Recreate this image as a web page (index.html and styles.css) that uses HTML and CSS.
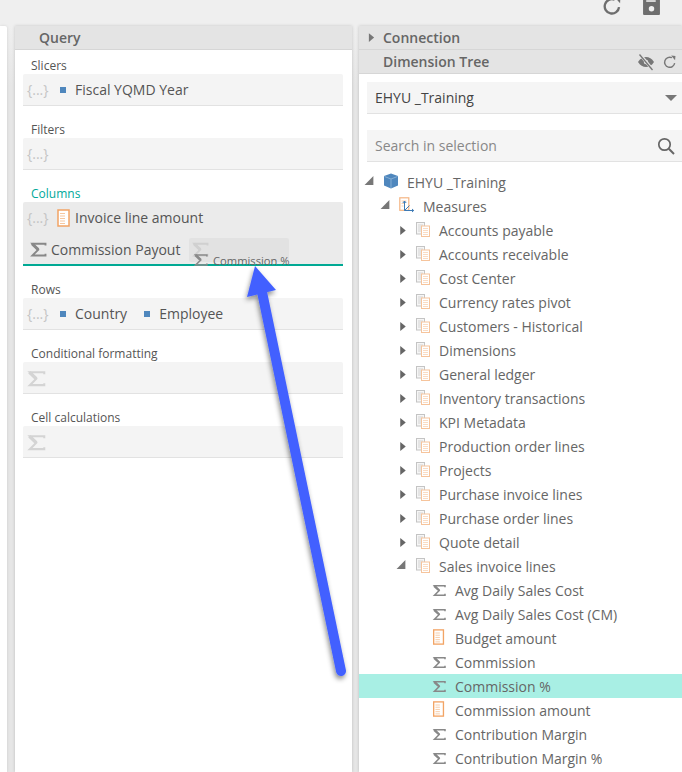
FILE: index.html
```html
<!DOCTYPE html>
<html lang="en">
<head>
<meta charset="utf-8">
<title>Query designer</title>
<link rel="stylesheet" href="styles.css">
</head>
<body>
<svg class="defs" width="0" height="0" aria-hidden="true">
  <symbol id="sigma" viewBox="0 0 16 16"><path d="M14 5.200V3.800H3.500L8.200 8.500 3.500 13.200H14V11.800" fill="none" stroke="currentColor" stroke-width="1.500"/><path d="M3.200 3.800 8.200 8.500" stroke="currentColor" stroke-width="2.400"/></symbol>
  <symbol id="measure" viewBox="0 0 16 18"><rect x="2" y="1" width="11" height="16" fill="#fff" stroke="#f2a465" stroke-width="1.500"/><path d="M4 4.500h5M4 7h5M4 9.500h5M4 12h5M4 14.500h5" stroke="#f6c79f" stroke-width="1"/></symbol>
  <symbol id="table" viewBox="0 0 16 16"><rect x="1.500" y="1.500" width="8" height="11.500" fill="#f6f6f6" stroke="#c4c4c4"/><path d="M3 4h5M3 6h5M3 8h5M3 10h5" stroke="#d4d4d4"/><rect x="6.500" y="5" width="8" height="10.500" fill="#fff" stroke="#f6c49c"/><path d="M8 7.500h5M8 9.500h5M8 11.500h5M8 13.500h5" stroke="#fadcc4"/></symbol>
  <symbol id="cube" viewBox="0 0 16 16"><path d="M8 .5 15 3v9.500L8 15.500 1 12.500V3z" fill="#4f87bd"/><path d="M1.500 3.500 8 6l6.500-2.500M8 6v9" fill="none" stroke="#86aed4" stroke-width="1"/></symbol>
  <symbol id="measures" viewBox="0 0 16 16"><rect x=".8" y=".8" width="9" height="12.500" fill="#fff" stroke="#f4b583" stroke-width="1.200"/><path d="M2.500 4h5M2.500 6.500h3M2.500 9h2" stroke="#f8cfae"/><path d="M5.500 4v9.500H14.500M3.800 6 5.500 4l1.700 2M13 12l1.700 1.500-1.700 1.500M5.500 13.500l5-5" fill="none" stroke="#3d7ab5" stroke-width="1"/></symbol>
  <symbol id="tri-right" viewBox="0 0 8 12"><path d="M1 1l6 5-6 5z" fill="currentColor"/></symbol>
  <symbol id="tri-open" viewBox="0 0 10 10"><path d="M9 1v8H1z" fill="currentColor"/></symbol>
</svg>

<header class="toolbar">
  <svg class="tool-icon" viewBox="0 0 18 18"><path d="M15.200 10.500A6.800 6.800 0 1 1 11 3.500" fill="none" stroke="currentColor" stroke-width="2.200"/><path d="M9.500 -.5l7 .3-.3 7z" fill="currentColor"/></svg>
  <svg class="tool-icon" viewBox="0 0 18 18"><path d="M1 0h13l3 3v14a1 1 0 0 1-1 1H2a1 1 0 0 1-1-1z" fill="currentColor"/><rect x="4" y="4" width="9" height="1.500" fill="#efefef"/><circle cx="9" cy="12" r="2.600" fill="#efefef"/></svg>
</header>

<main class="workspace">
  <div class="side-stub"></div>

  <section class="panel query">
    <h2 class="panel-head query-head">Query</h2>
    <div class="query-body">
      <div class="slot">
        <div class="slot-label">Slicers</div>
        <div class="slot-box">
          <span class="braces">{...}</span>
          <span class="chip"><i class="dot"></i>Fiscal YQMD Year</span>
        </div>
      </div>
      <div class="slot">
        <div class="slot-label">Filters</div>
        <div class="slot-box"><span class="braces">{...}</span></div>
      </div>
      <div class="slot">
        <div class="slot-label active">Columns</div>
        <div class="slot-box drop">
          <div class="drop-row">
            <span class="braces">{...}</span>
            <span class="chip"><svg class="ico-measure"><use href="#measure"/></svg>Invoice line amount</span>
          </div>
          <div class="drop-row second">
            <span class="chip"><svg class="ico-sigma"><use href="#sigma"/></svg>Commission Payout</span>
          </div>
          <div class="ghost">
            <svg class="ghost-back"><use href="#sigma"/></svg>
            <svg class="ghost-front"><use href="#sigma"/></svg>
            <span class="ghost-text">Commission %</span>
          </div>
        </div>
      </div>
      <div class="slot">
        <div class="slot-label">Rows</div>
        <div class="slot-box">
          <span class="braces">{...}</span>
          <span class="chip"><i class="dot"></i>Country</span>
          <span class="chip"><i class="dot"></i>Employee</span>
        </div>
      </div>
      <div class="slot">
        <div class="slot-label">Conditional formatting</div>
        <div class="slot-box"><svg class="ico-faint"><use href="#sigma"/></svg></div>
      </div>
      <div class="slot">
        <div class="slot-label">Cell calculations</div>
        <div class="slot-box"><svg class="ico-faint"><use href="#sigma"/></svg></div>
      </div>
    </div>
  </section>

  <section class="panel tree-panel">
    <h2 class="panel-head"><svg class="head-tri"><use href="#tri-right"/></svg>Connection</h2>
    <h2 class="panel-head">
      <span class="head-title">Dimension Tree</span>
      <svg class="head-icon" viewBox="0 0 18 18"><path d="M1 9c2-3.500 5-5 8-5s6 1.500 8 5c-2 3.500-5 5-8 5s-6-1.500-8-5z" fill="currentColor"/><circle cx="9" cy="9" r="2.200" fill="#e4e4e4"/><path d="M3 1.500 15.500 16.500" stroke="#e4e4e4" stroke-width="3"/><path d="M2.500 1.500 15.500 17" stroke="currentColor" stroke-width="1.300"/></svg>
      <svg class="head-icon small" viewBox="0 0 18 18"><path d="M15 10.500A6.500 6.500 0 1 1 11.500 3.500" fill="none" stroke="currentColor" stroke-width="1.800"/><path d="M10.500 .8l5.500.5-.5 5.500z" fill="currentColor"/></svg>
    </h2>
    <div class="tree-body">
      <div class="select"><span>EHYU _Training</span><i class="caret"></i></div>
      <div class="search"><span>Search in selection</span>
        <svg class="search-icon" viewBox="0 0 18 18"><circle cx="7.500" cy="7.500" r="5.700" fill="none" stroke="currentColor" stroke-width="1.700"/><path d="M11.800 11.800 17 17" stroke="currentColor" stroke-width="2"/></svg>
      </div>
      <ul class="tree">
        <li class="node l0"><svg class="tog open"><use href="#tri-open"/></svg><svg class="ico"><use href="#cube"/></svg>EHYU _Training</li>
        <li class="node l1"><svg class="tog open"><use href="#tri-open"/></svg><svg class="ico"><use href="#measures"/></svg>Measures</li>
        <li class="node l2"><svg class="tog"><use href="#tri-right"/></svg><svg class="ico"><use href="#table"/></svg>Accounts payable</li>
        <li class="node l2"><svg class="tog"><use href="#tri-right"/></svg><svg class="ico"><use href="#table"/></svg>Accounts receivable</li>
        <li class="node l2"><svg class="tog"><use href="#tri-right"/></svg><svg class="ico"><use href="#table"/></svg>Cost Center</li>
        <li class="node l2"><svg class="tog"><use href="#tri-right"/></svg><svg class="ico"><use href="#table"/></svg>Currency rates pivot</li>
        <li class="node l2"><svg class="tog"><use href="#tri-right"/></svg><svg class="ico"><use href="#table"/></svg>Customers - Historical</li>
        <li class="node l2"><svg class="tog"><use href="#tri-right"/></svg><svg class="ico"><use href="#table"/></svg>Dimensions</li>
        <li class="node l2"><svg class="tog"><use href="#tri-right"/></svg><svg class="ico"><use href="#table"/></svg>General ledger</li>
        <li class="node l2"><svg class="tog"><use href="#tri-right"/></svg><svg class="ico"><use href="#table"/></svg>Inventory transactions</li>
        <li class="node l2"><svg class="tog"><use href="#tri-right"/></svg><svg class="ico"><use href="#table"/></svg>KPI Metadata</li>
        <li class="node l2"><svg class="tog"><use href="#tri-right"/></svg><svg class="ico"><use href="#table"/></svg>Production order lines</li>
        <li class="node l2"><svg class="tog"><use href="#tri-right"/></svg><svg class="ico"><use href="#table"/></svg>Projects</li>
        <li class="node l2"><svg class="tog"><use href="#tri-right"/></svg><svg class="ico"><use href="#table"/></svg>Purchase invoice lines</li>
        <li class="node l2"><svg class="tog"><use href="#tri-right"/></svg><svg class="ico"><use href="#table"/></svg>Purchase order lines</li>
        <li class="node l2"><svg class="tog"><use href="#tri-right"/></svg><svg class="ico"><use href="#table"/></svg>Quote detail</li>
        <li class="node l2"><svg class="tog open"><use href="#tri-open"/></svg><svg class="ico"><use href="#table"/></svg>Sales invoice lines</li>
        <li class="node l3"><span class="tog"></span><svg class="ico grey"><use href="#sigma"/></svg>Avg Daily Sales Cost</li>
        <li class="node l3"><span class="tog"></span><svg class="ico grey"><use href="#sigma"/></svg>Avg Daily Sales Cost (CM)</li>
        <li class="node l3"><span class="tog"></span><svg class="ico"><use href="#measure"/></svg>Budget amount</li>
        <li class="node l3"><span class="tog"></span><svg class="ico grey"><use href="#sigma"/></svg>Commission</li>
        <li class="node l3 selected"><span class="tog"></span><svg class="ico grey"><use href="#sigma"/></svg>Commission %</li>
        <li class="node l3"><span class="tog"></span><svg class="ico"><use href="#measure"/></svg>Commission amount</li>
        <li class="node l3"><span class="tog"></span><svg class="ico grey"><use href="#sigma"/></svg>Contribution Margin</li>
        <li class="node l3"><span class="tog"></span><svg class="ico grey"><use href="#sigma"/></svg>Contribution Margin %</li>
      </ul>
    </div>
  </section>

  <svg class="arrow" viewBox="0 0 682 772" aria-hidden="true">
    <defs>
      <filter id="arrow-shadow" x="-30%" y="-10%" width="160%" height="120%">
        <feDropShadow dx="-1" dy="3" stdDeviation="2.500" flood-color="#000" flood-opacity=".45"/>
      </filter>
    </defs>
    <g filter="url(#arrow-shadow)">
      <path d="M341 671 262 292" stroke="#4361ff" stroke-width="10" stroke-linecap="round" fill="none"/>
      <path d="M255 266 276 290 247 297z" fill="#4361ff"/>
    </g>
  </svg>
</main>
</body>
</html>
```
FILE: styles.css
```css
* { box-sizing: border-box; }
html, body { margin: 0; padding: 0; }
body {
  width: 682px;
  height: 772px;
  overflow: hidden;
  background: #efefef;
  font-family: "Open Sans", sans-serif;
  font-size: 14px;
  color: #555;
}
.defs { position: absolute; }
.toolbar {
  height: 26px;
  display: flex;
  justify-content: flex-end;
  align-items: flex-end;
  gap: 20px;
  padding: 0 21px 11px 0;
  overflow: hidden;
  color: #6e6e6e;
}
.tool-icon { width: 19px; height: 19px; flex: none; }
.workspace {
  position: relative;
  height: 746px;
  display: flex;
  background: linear-gradient(#efefef, #e6e6e6 60px);
}
.side-stub {
  width: 7px;
  margin-right: 8px;
  background: #fff;
  border-top-right-radius: 2px;
  box-shadow: 0 0 3px rgba(0,0,0,.12);
}
.panel {
  background: #fff;
  box-shadow: 0 0 3px rgba(0,0,0,.18);
}
.query { width: 337px; margin-right: 7px; }
.tree-panel { width: 323px; }
.panel-head {
  position: relative;
  display: flex;
  align-items: center;
  height: 24px;
  margin: 0;
  padding-left: 24px;
  background: #e4e4e4;
  border-bottom: 1px solid #d6d6d6;
  font-size: 14px;
  font-weight: 600;
  color: #666;
}
.query-head { padding-left: 24px; }
.head-tri { position: absolute; left: 9px; top: 6px; width: 7px; height: 11px; color: #777; }
.head-title { flex: 1; }
.head-icon { width: 18px; height: 18px; margin-right: 8px; color: #777; flex: none; }
.head-icon.small { width: 14px; height: 14px; margin-right: 5px; }

.query-body { padding: 0 9px 0 8px; }
.slot { margin-bottom: 8px; }
.slot-label {
  height: 24px;
  padding-left: 8px;
  font-size: 12px;
  line-height: 31px;
  color: #555;
}
.slot-label.active { color: #00a99a; }
.slot-box {
  position: relative;
  display: flex;
  align-items: center;
  height: 32px;
  padding-left: 4px;
  background: #f4f4f4;
  border-bottom: 1px solid #e2e2e2;
  border-radius: 2px 2px 0 0;
}
.braces {
  width: 20px;
  margin-right: 9px;
  font-size: 14px;
  color: #c4c4c4;
  flex: none;
  white-space: nowrap;
}
.chip { display: inline-flex; align-items: center; margin-right: 13px; color: #555; white-space: nowrap; }
.dot { width: 6px; height: 6px; margin: 0 9px 0 4px; background: #4f87bd; flex: none; }
.drop {
  display: block;
  height: 64px;
  padding: 0;
  background: #ebebeb;
  border-bottom: 2px solid #00a994;
}
.drop-row { display: flex; align-items: center; height: 31px; padding-left: 4px; }
.drop-row.second { height: 32px; padding-left: 5px; }
.ico-measure { width: 16px; height: 18px; margin-right: 3px; flex: none; }
.ico-sigma { width: 20px; height: 20px; margin-right: 3px; flex: none; color: #888; }
.ico-faint { width: 22px; height: 22px; margin-left: -2px; flex: none; color: #d4d4d4; }
.ghost {
  position: absolute;
  left: 166px;
  top: 36px;
  width: 100px;
  height: 24px;
  background: rgba(0,0,0,.035);
  border-radius: 2px;
}
.ghost-back { position: absolute; left: 1px; top: 1px; width: 20px; height: 20px; color: #d0d0d0; }
.ghost-front { position: absolute; left: 3px; top: 13px; width: 17px; height: 17px; color: #8a8a8a; }
.ghost-text { position: absolute; left: 24px; top: 15px; font-size: 11.2px; line-height: 15px; color: #666; white-space: nowrap; }

.tree-body { padding-top: 8px; }
.select, .search {
  display: flex;
  align-items: center;
  justify-content: space-between;
  height: 32px;
  margin-left: 8px;
  padding-left: 8px;
  background: #f5f5f5;
  border-bottom: 1px solid #e2e2e2;
}
.select { margin-bottom: 16px; color: #444; }
.search { margin-bottom: 8px; color: #888; }
.caret {
  width: 0;
  height: 0;
  margin-right: 5px;
  border-left: 6px solid transparent;
  border-right: 6px solid transparent;
  border-top: 6px solid #777;
}
.search-icon { width: 18px; height: 18px; margin-right: 7px; color: #666; }
.tree { margin: 0; padding: 0; list-style: none; }
.node {
  display: flex;
  align-items: center;
  height: 24px;
  color: #666;
  white-space: nowrap;
}
.l0 { padding-left: 4px; }
.l1 { padding-left: 20px; }
.l2 { padding-left: 36px; }
.l3 { padding-left: 52px; }
.tog { width: 16px; height: 11px; flex: none; color: #666; }
.tog.open { color: #777; margin: 0 2px 3px -2px; }
.ico { width: 16px; height: 16px; margin: -2px 8px 0 4px; flex: none; }
.ico.grey { color: #888; margin-top: 0; }
.selected { background: #a8efe4; }
.arrow { position: absolute; left: 0; top: -26px; width: 682px; height: 772px; pointer-events: none; }
```
